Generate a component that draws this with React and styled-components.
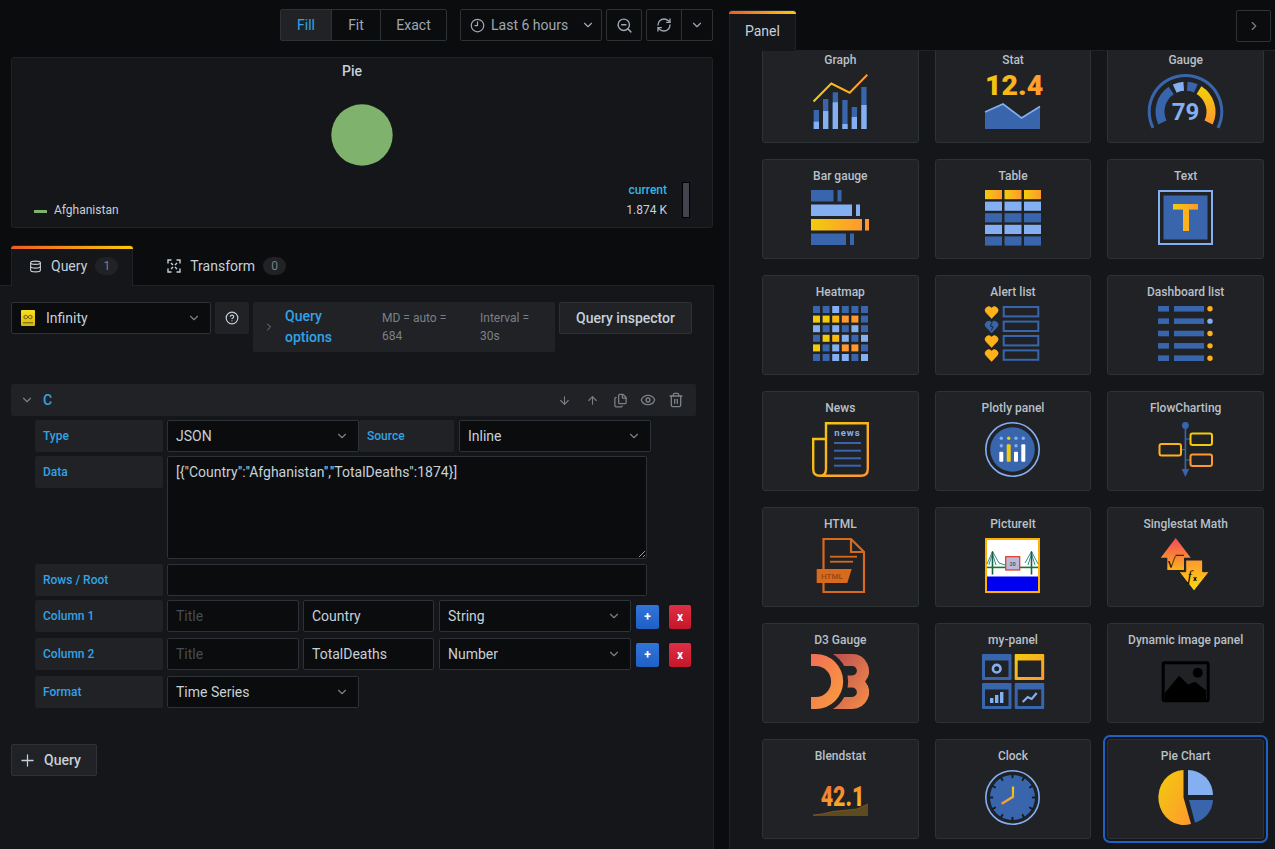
import React from 'react'
import styled, { createGlobalStyle } from 'styled-components'
import {
  ArrowDown, ArrowUp, ChevronDown, ChevronRight, CircleHelp, Clock9, Database, Eye, Files, Plus, RefreshCw, Trash2, ZoomOut,
} from 'lucide-react'

const DARK = '#3865ab'
const LIGHT = '#84aff1'
const AMBER = '#ffb11b'
const YELLOW = '#f2cc0c'
const ORANGE = '#ff9830'

const GlobalStyle = createGlobalStyle`
  html, body { margin: 0; padding: 0; background: #0b0c0e; }
  body { font-family: Roboto, "Liberation Sans", sans-serif; font-size: 14px; color: #c7d0d9; }
  * { box-sizing: border-box; }
`

const Page = styled.div`
  width: 1275px;
  height: 849px;
  display: flex;
  overflow: hidden;
  background: #0b0c0e;
`

const Left = styled.div`
  width: 714px;
  height: 100%;
  display: flex;
  flex-direction: column;
`

const Toolbar = styled.div`
  display: flex;
  justify-content: flex-end;
  padding: 9px 1px 0 0;
  height: 41px;
  flex: none;
`

const ToolGroup = styled.div`
  display: flex;
  margin-left: ${p => p.$gap || 4}px;
  height: 32px;
  border: 1px solid #2c3235;
  border-radius: 2px;
`

const ToolButton = styled.div`
  display: flex;
  align-items: center;
  justify-content: center;
  width: ${p => p.$w}px;
  color: ${p => (p.$active ? '#33a2e5' : '#9fa7b3')};
  background: ${p => (p.$active ? '#202226' : 'transparent')};
  border-left: ${p => (p.$first ? 'none' : '1px solid #2c3235')};
`

const TimeButton = styled(ToolButton)`
  justify-content: space-between;
  padding: 0 6px 0 9px;
`

const TimeLabel = styled.span`
  display: flex;
  align-items: center;
  gap: 6px;
`

const GraphPanel = styled.div`
  flex: none;
  margin: 16px 1px 0 11px;
  height: 171px;
  background: #141619;
  border: 1px solid #202226;
  border-radius: 3px;
  display: flex;
  flex-direction: column;
`

const PanelTitle = styled.div`
  height: 28px;
  line-height: 27px;
  text-align: center;
  padding-right: 20px;
  font-weight: 500;
  font-size: 14px;
`

const PieWrap = styled.div`
  flex: none;
  height: 62px;
  margin-top: 18px;
  display: flex;
  justify-content: center;
`

const Legend = styled.div`
  display: flex;
  justify-content: space-between;
  align-items: flex-end;
  padding: 0 22px 7px 22px;
  margin-top: 14px;
  font-size: 12px;
`

const LegendKey = styled.div`
  display: flex;
  align-items: center;
  height: 20px;
`

const Swatch = styled.span`
  width: 13px;
  height: 3px;
  margin: 2px 7px 0 0;
  background: #7eb26d;
`

const LegendRight = styled.div`
  display: flex;
  align-items: flex-end;
`

const LegendValues = styled.div`
  text-align: right;
  line-height: 20px;
`

const LegendHead = styled.div`
  color: #33b5e5;
  font-weight: 500;
`

const LegendBar = styled.div`
  width: 8px;
  height: 36px;
  margin: 0 0 2px 15px;
  background: #41434f;
  border: 1px solid #000;
`

const Tabs = styled.div`
  flex: none;
  display: flex;
  height: 41px;
  margin-top: 17px;
  padding-left: 11px;
  border-bottom: 1px solid #202226;
`

const Tab = styled.div`
  position: relative;
  display: flex;
  align-items: center;
  height: 41px;
  padding: 0 14px 0 17px;
  margin-left: ${p => (p.$active ? 0 : 16)}px;
  background: ${p => (p.$active ? '#141619' : 'transparent')};
  border: 1px solid ${p => (p.$active ? '#202226' : 'transparent')};
  border-bottom: none;
  border-radius: 3px 3px 0 0;
  &::before {
    content: '';
    display: ${p => (p.$active ? 'block' : 'none')};
    position: absolute;
    left: -1px;
    right: -1px;
    top: 0;
    height: 3px;
    background: linear-gradient(90deg, #f05a28, #fbca0a);
    border-radius: 3px 3px 0 0;
  }
`

const TabLabel = styled.span`
  margin-left: 9px;
`

const Badge = styled.span`
  margin-left: 8px;
  width: 23px;
  height: 18px;
  line-height: 18px;
  text-align: center;
  border-radius: 9px;
  background: #202226;
  color: #7b8087;
  font-size: 12px;
`

const QuerySection = styled.div`
  flex: 1;
  padding: 16px 0 0 11px;
  background: #141619;
  border-right: 1px solid #202226;
`

const TopRow = styled.div`
  display: flex;
  align-items: flex-start;
  height: 50px;
  margin-bottom: 32px;
`

const SelectBox = styled.div`
  display: flex;
  align-items: center;
  justify-content: space-between;
  flex: none;
  width: ${p => p.$w}px;
  height: 32px;
  padding: 0 9px 0 8px;
  margin-left: ${p => p.$ml || 0}px;
  background: #0b0c0e;
  border: 1px solid #2c3235;
  border-radius: 2px;
  color: #c7d0d9;
  svg { color: #7b8087; }
`

const SourceName = styled.div`
  display: flex;
  align-items: center;
  gap: 11px;
  margin-left: 1px;
`

const SourceLogo = styled.svg`
  width: 14px;
  height: 16px;
  display: block;
`

const HelpButton = styled.div`
  width: 34px;
  height: 32px;
  margin-left: 4px;
  display: flex;
  align-items: center;
  justify-content: center;
  background: #202226;
  border-radius: 2px;
`

const OptionsBox = styled.div`
  width: 302px;
  height: 50px;
  margin-left: 4px;
  padding-left: 10px;
  display: flex;
  align-items: center;
  background: #202226;
  border-radius: 2px;
  svg { color: #7b8087; flex: none; }
`

const OptionsTitle = styled.div`
  flex: none;
  width: 97px;
  margin-left: 10px;
  padding-right: 40px;
  color: #33a2e5;
  font-weight: 500;
  line-height: 21px;
`

const OptionsInfo = styled.div`
  flex: none;
  width: ${p => p.$w}px;
  padding-right: ${p => p.$pr}px;
  color: #7b8087;
  font-size: 12px;
  line-height: 18px;
`

const InspectorButton = styled.div`
  width: 133px;
  height: 32px;
  margin-left: 4px;
  display: flex;
  align-items: center;
  justify-content: center;
  font-weight: 500;
  background: #202226;
  border: 1px solid #2c3235;
  border-radius: 2px;
`

const QueryHeader = styled.div`
  width: 685px;
  height: 32px;
  display: flex;
  align-items: center;
  padding: 0 6px 0 9px;
  margin-bottom: 4px;
  background: #202226;
  border-radius: 2px;
  svg { color: #7b8087; }
`

const QueryLetter = styled.span`
  flex: 1;
  margin-left: 9px;
  color: #33a2e5;
  font-weight: 500;
`

const HeaderAction = styled.span`
  width: 28px;
  display: flex;
  justify-content: center;
`

const FormRow = styled.div`
  display: flex;
  align-items: flex-start;
  margin: 0 0 ${p => p.$mb ?? 4}px 24px;
`

const FieldLabel = styled.div`
  flex: none;
  width: ${p => p.$w || 128}px;
  height: 32px;
  line-height: 32px;
  padding-left: 8px;
  margin-right: ${p => p.$mr ?? 4}px;
  background: #202226;
  border-radius: 2px;
  color: #33a2e5;
  font-size: 12px;
  font-weight: 500;
`

const TextField = styled.input`
  flex: none;
  width: ${p => p.$w}px;
  height: 32px;
  padding: 0 8px;
  margin-right: ${p => p.$mr || 0}px;
  background: #0b0c0e;
  border: 1px solid #2c3235;
  border-radius: 2px;
  color: #c7d0d9;
  font: 14px Roboto, sans-serif;
  outline: none;
  &::placeholder { color: #464c54; opacity: 1; }
`

const DataArea = styled.textarea`
  display: block;
  flex: none;
  width: 480px;
  height: 103px;
  padding: 5px 8px;
  margin: 0;
  background: #0b0c0e;
  border: 1px solid #2c3235;
  border-radius: 2px;
  color: #c7d0d9;
  font: 14px/20px Roboto, sans-serif;
  outline: none;
  resize: vertical;
`

const SquareButton = styled.div`
  flex: none;
  width: ${p => p.$w}px;
  height: 24px;
  margin: 5px 0 0 ${p => p.$ml}px;
  display: flex;
  align-items: center;
  justify-content: center;
  border-radius: 2px;
  color: #fff;
  font-size: 12px;
  font-weight: 700;
  background: ${p => (p.$danger ? 'linear-gradient(180deg, #e02f44, #c4162a)' : 'linear-gradient(180deg, #3274d9, #1f60c4)')};
`

const AddQuery = styled.div`
  width: 86px;
  height: 32px;
  margin-top: 36px;
  display: flex;
  align-items: center;
  gap: 7px;
  padding-left: 6px;
  background: #202226;
  border: 1px solid #2c3235;
  border-radius: 2px;
  font-weight: 500;
`

const Right = styled.div`
  flex: 1;
  margin-left: 15px;
  height: 100%;
  display: flex;
  flex-direction: column;
  min-width: 0;
`

const RightHead = styled.div`
  flex: none;
  position: relative;
  z-index: 1;
  height: 51px;
  padding: 10px 4px 0 0;
  display: flex;
  justify-content: space-between;
  align-items: flex-start;
  background: #0b0c0e;
  border-bottom: 1px solid #202226;
`

const PanelTab = styled(Tab)`
  width: 67px;
  padding: 0 0 0 15px;
`

const CollapseButton = styled.div`
  width: 35px;
  height: 32px;
  display: flex;
  align-items: center;
  justify-content: center;
  border: 1px solid #2c3235;
  border-radius: 2px;
  svg { color: #7b8087; }
`

const RightBody = styled.div`
  flex: 1;
  overflow: hidden;
  padding: 0 11px 0 32px;
  background: #141619;
  border-left: 1px solid #202226;
`

const CardGrid = styled.div`
  display: grid;
  grid-template-columns: repeat(3, 1fr);
  gap: 16px;
  margin-top: -8px;
`

const Card = styled.div`
  height: 100px;
  padding-top: 7px;
  display: flex;
  flex-direction: column;
  align-items: center;
  background: #202226;
  border: 1px solid #2c3235;
  border-radius: 3px;
  box-shadow: ${p => (p.$selected ? '0 0 0 2px #141619, 0 0 0 4px #1f60c4' : 'none')};
`

const CardTitle = styled.div`
  height: 18px;
  line-height: 18px;
  margin-bottom: 5px;
  font-size: 12px;
  font-weight: 500;
  color: #b9c0c8;
`

const Art = styled.svg`
  display: block;
  flex: none;
  width: ${p => p.$w || 55}px;
  height: 55px;
  overflow: visible;
  font-family: Roboto, sans-serif;
`

const GradientDefs = styled.svg`
  display: block;
  width: 0;
  height: 0;
`

function Gradients() {
  return (
    <GradientDefs aria-hidden="true">
      <defs>
        <linearGradient id="warm"><stop offset="0" stopColor={YELLOW} /><stop offset="1" stopColor={ORANGE} /></linearGradient>
        <linearGradient id="warmDiag" x1="0" y1="0" x2="1" y2="1"><stop offset="0" stopColor={YELLOW} /><stop offset="1" stopColor={ORANGE} /></linearGradient>
        <linearGradient id="warmDown" x1="0" y1="0" x2="0" y2="1"><stop offset="0" stopColor={YELLOW} /><stop offset="1" stopColor={ORANGE} /></linearGradient>
        <linearGradient id="hotUp" x1="0" y1="0" x2="0" y2="1"><stop offset="0" stopColor="#f2495c" /><stop offset="1" stopColor={AMBER} /></linearGradient>
        <linearGradient id="hotDown" x1="0" y1="0" x2="0" y2="1"><stop offset="0" stopColor={ORANGE} /><stop offset="1" stopColor="#ffd90c" /></linearGradient>
        <linearGradient id="blend" x1="0" y1="0" x2="0.6" y2="1"><stop offset="0" stopColor="#f2603f" /><stop offset="1" stopColor="#f6c21a" /></linearGradient>
        <linearGradient id="d3a" x1="0" y1="0" x2="1" y2="1"><stop offset="0" stopColor="#f26d58" /><stop offset="1" stopColor="#f9a03c" /></linearGradient>
        <linearGradient id="d3b" x1="0" y1="0" x2="1" y2="1"><stop offset="0" stopColor="#b84e51" /><stop offset="1" stopColor="#f68e48" /></linearGradient>
        <linearGradient id="logo" x1="0" y1="0" x2="0" y2="1"><stop offset="0" stopColor="#f7e21f" /><stop offset="1" stopColor="#d9b40c" /></linearGradient>
      </defs>
    </GradientDefs>
  )
}

const GraphIcon = () => {
  const bars = [[0.7, 36, 47.7], [10, 25, 37], [19.7, 18.3, 28.3], [29.3, 26, 50], [38.7, 33, 43], [48.3, 13, 31]]
  return (
    <Art viewBox="0 0 55 55">
      {bars.map(([x, top, mid]) => (
        <g key={x}>
          <rect x={x} y={top} width="5.3" height={55 - top} fill={DARK} />
          <rect x={x} y={mid} width="5.3" height={55 - mid} fill={LIGHT} />
        </g>
      ))}
      <polyline points="0.5,27.5 18.3,9.5 36.7,18.7 54.3,0.8" fill="none" stroke="url(#warm)" strokeWidth="2" />
    </Art>
  )
}

const StatIcon = () => (
  <Art viewBox="0 0 56 55" $w={56}>
    <text x="0" y="21" fontSize="28.5" fontWeight="900" fill="url(#warm)">12.4</text>
    <polygon points="0,38 18,30 36.5,44 55,32.5 55,55 0,55" fill={DARK} />
    <polyline points="0,38 18,30 36.5,44 55,32.5" fill="none" stroke={LIGHT} strokeWidth="1.6" />
  </Art>
)

const gaugeArc = (r, a0, a1) => {
  const pt = a => [38.5 + r * Math.cos((a * Math.PI) / 180), 37.7 - r * Math.sin((a * Math.PI) / 180)]
  const [x0, y0] = pt(a0)
  const [x1, y1] = pt(a1)
  return `M${x0} ${y0}A${r} ${r} 0 ${a0 - a1 > 180 ? 1 : 0} 1 ${x1} ${y1}`
}

const GaugeIcon = () => (
  <Art viewBox="0 0 77 55" $w={77}>
    <path d={gaugeArc(36.3, 206.5, -26.5)} fill="none" stroke={DARK} strokeWidth="3" />
    <path d={gaugeArc(25.5, 205, 124)} fill="none" stroke={DARK} strokeWidth="9" />
    <path d={gaugeArc(25.5, 115, 94)} fill="none" stroke={LIGHT} strokeWidth="9" />
    <path d={gaugeArc(25.5, 86, 66)} fill="none" stroke={DARK} strokeWidth="9" />
    <path d={gaugeArc(25.5, 58, -25)} fill="none" stroke="url(#warmDown)" strokeWidth="9" />
    <text x="38.5" y="46" fontSize="24" fontWeight="700" fill={LIGHT} textAnchor="middle">79</text>
  </Art>
)

const BarGaugeIcon = () => {
  const rows = [[0, 22.5, 26.5, DARK], [14.5, 41, 45, LIGHT], [29, 51, 54, 'url(#warm)'], [43.5, 35, 39, DARK]]
  return (
    <Art viewBox="0 0 58 55" $w={58}>
      {rows.map(([y, w, tick, fill]) => (
        <g key={y}>
          <rect x="0" y={y} width={w} height="11.5" fill={fill} />
          <rect x={tick} y={y} width="4" height="11.5" fill={fill === DARK || fill === LIGHT ? fill : ORANGE} />
        </g>
      ))}
    </Art>
  )
}

const TableIcon = () => {
  const rows = ['url(#warm)', LIGHT, DARK, LIGHT, DARK]
  return (
    <Art viewBox="0 0 56 55" $w={56}>
      {rows.map((fill, r) => [0, 19.5, 39].map(x => (
        <rect key={`${r}-${x}`} x={x} y={r * 11.6} width="17" height="9.2" fill={fill} />
      )))}
    </Art>
  )
}

const TextIcon = () => (
  <Art viewBox="0 0 55 55">
    <rect x="1" y="1" width="53" height="53" fill="none" stroke={LIGHT} strokeWidth="2" />
    <rect x="5.5" y="5.5" width="44" height="44" fill={DARK} />
    <rect x="15" y="14" width="25" height="5.6" fill="url(#warm)" />
    <rect x="25" y="19" width="6" height="22" fill={AMBER} />
  </Art>
)

const HeatmapIcon = () => {
  const colors = { d: DARK, l: LIGHT, y: YELLOW, a: '#fbb912', o: ORANGE }
  const grid = ['ddlddd', 'yyaood', 'ldldld', 'dyaldl', 'ydlood', 'ddlldl']
  return (
    <Art viewBox="0 0 55 55">
      {grid.map((row, r) => row.split('').map((c, i) => (
        <rect key={`${r}-${i}`} x={i * 9.6} y={r * 9.6} width="7" height="7" fill={colors[c]} />
      )))}
    </Art>
  )
}

const Heart = ({ y, fill, broken }) => (
  <g transform={`translate(0 ${y})`}>
    <path d="M6.6 12.4 L1 6.6 A3.5 3.5 0 0 1 6.6 2 A3.5 3.5 0 0 1 12.2 6.6 Z" fill={fill} stroke={fill} strokeWidth="0.6" strokeLinejoin="round" />
    {broken && <polyline points="7.2,2 5.2,5.6 8,6.4 6.2,10" fill="none" stroke="#202226" strokeWidth="1" />}
  </g>
)

const AlertListIcon = () => (
  <Art viewBox="0 0 55 55">
    <Heart y={0} fill={AMBER} />
    <Heart y={14.5} fill={DARK} broken />
    <Heart y={29} fill={AMBER} />
    <Heart y={43} fill={AMBER} />
    {[1, 15.6, 30, 44.4].map(y => (
      <rect key={y} x="18.7" y={y} width="34.6" height="9.4" fill="none" stroke={DARK} strokeWidth="2" />
    ))}
  </Art>
)

const DashListIcon = () => (
  <Art viewBox="0 0 55 55">
    {[0, 1, 2, 3, 4].map(i => (
      <g key={i}>
        <rect x="0" y={i * 12.35} width="11" height="5.6" fill={DARK} />
        <rect x="16" y={i * 12.35} width="30" height="5.6" fill={DARK} />
        <circle cx="52" cy={i * 12.35 + 2.8} r="2.7" fill={i === 1 ? LIGHT : AMBER} />
      </g>
    ))}
  </Art>
)

const NewsIcon = () => (
  <Art viewBox="0 0 57 55" $w={57}>
    <path d="M14 17V1.2H55.8V47Q55.8 53.8 49 53.8H8Q1.2 53.8 1.2 47V17H14V47Q14 53.8 8 53.8" fill="none" stroke="url(#warmDiag)" strokeWidth="2.4" />
    <text x="35.5" y="14" fontSize="9.5" fontWeight="700" fill={LIGHT} textAnchor="middle" letterSpacing="1">news</text>
    {[21, 28.7, 36.3, 43.7].map(y => (
      <rect key={y} x="22" y={y - 1} width="27" height="2" fill={DARK} />
    ))}
  </Art>
)

const PlotlyIcon = () => {
  const bars = [[16.3, 29.7, '#fff'], [23.7, 22.3, YELLOW], [31, 29.7, '#fff'], [38.3, 22.3, '#fff']]
  return (
    <Art viewBox="0 0 55 55">
      <circle cx="27.5" cy="27.5" r="26.7" fill="none" stroke={LIGHT} strokeWidth="1.6" />
      <circle cx="27.5" cy="27.5" r="22.3" fill={DARK} />
      {[16.3, 23.7, 31, 38.3].map((x, i) => <circle key={x} cx={x} cy="16.3" r="1.7" fill={i === 1 ? YELLOW : LIGHT} />)}
      {[16.3, 31].map(x => <circle key={x} cx={x} cy="23.7" r="1.7" fill={LIGHT} />)}
      {bars.map(([x, y, fill]) => <rect key={x} x={x - 2} y={y} width="4" height={39.7 - y} rx="1" fill={fill} />)}
    </Art>
  )
}

const FlowIcon = () => (
  <Art viewBox="0 0 55 55">
    <rect x="26.6" y="3" width="1.6" height="46" fill={DARK} />
    <circle cx="27.4" cy="3.4" r="3.4" fill={DARK} />
    <polygon points="23.7,47 31.1,47 27.4,55" fill={DARK} />
    <rect x="28" y="16.4" width="4" height="1.2" fill={DARK} />
    <rect x="23" y="27" width="4" height="1.2" fill={DARK} />
    <rect x="28" y="37.4" width="4" height="1.2" fill={DARK} />
    <rect x="32.5" y="11.5" width="21.5" height="11.5" rx="2" fill="none" stroke={YELLOW} strokeWidth="2" />
    <rect x="1.5" y="22" width="21.5" height="11.5" rx="2" fill="none" stroke={AMBER} strokeWidth="2" />
    <rect x="32.5" y="32.5" width="21.5" height="11.5" rx="2" fill="none" stroke={ORANGE} strokeWidth="2" />
  </Art>
)

const HtmlIcon = () => (
  <Art viewBox="0 0 55 55">
    <path d="M10.5 31V1H38L51 14V54H10.5V45" fill="none" stroke="#d8691d" strokeWidth="2.2" />
    <path d="M38 1V14H51" fill="none" stroke="#d8691d" strokeWidth="2.2" />
    <rect x="17" y="17.8" width="27" height="1.8" fill="#d8691d" />
    <rect x="17" y="22.8" width="23" height="1.8" fill="#d8691d" />
    <polygon points="3.7,31 38.7,31 34.3,45 3.7,45" fill="#d8691d" />
    <text x="8" y="41" fontSize="8" fontWeight="500" fill="#8d4a1b">HTML</text>
  </Art>
)

const PictureItIcon = () => (
  <Art viewBox="0 0 55 55">
    <rect x="1" y="1" width="53" height="53" fill="#fff" stroke="#ffb000" strokeWidth="2" />
    <rect x="2" y="38.5" width="51" height="14.5" fill="#0000f0" />
    <path d="M2 26 L7.5 13.5 L14 25 M7.5 13.5 V27 M3.8 27 L7.5 16 M11 27 L7.5 16 M46.5 13.5 L40 25 M46.5 13.5 L53 26 M46.5 13.5 V27 M43 27 L46.5 16 M50 27 L46.5 16 M14 25 L20 27" fill="none" stroke="#2f8f8f" strokeWidth="1" />
    <rect x="6.7" y="13.5" width="1.6" height="23" fill="#1f5f4a" />
    <rect x="45.7" y="13.5" width="1.6" height="23" fill="#1f5f4a" />
    <rect x="2" y="28.6" width="51" height="1.6" fill="#0f7f20" />
    <rect x="20.7" y="18.7" width="14" height="13.3" fill="#b9b9dc" stroke="#e8331a" strokeWidth="1.2" />
    <text x="27.7" y="27.5" fontSize="5" fontWeight="700" fill="#555" textAnchor="middle">20</text>
  </Art>
)

const SinglestatIcon = () => (
  <Art viewBox="0 0 55 55">
    <polygon points="17.7,0 32.7,19.7 26,19.7 26,32 9.3,32 9.3,19.7 2.7,19.7" fill="url(#hotUp)" />
    <polygon points="27.7,22 44.7,22 44.7,33.7 51.3,33.7 36,53 21,33.7 27.7,33.7" fill="url(#hotDown)" stroke="#202226" strokeWidth="1" />
    <text x="9" y="30" fontSize="14" fill="#000" fontFamily="DejaVu Sans, sans-serif">√</text>
    <rect x="17.5" y="16.8" width="8.5" height="0.9" fill="#000" />
    <text x="29.5" y="43" fontSize="15" fontStyle="italic" fill="#000" fontFamily="Liberation Serif, serif">f</text>
    <text x="35" y="43" fontSize="7.5" fontWeight="700" fill="#000">x</text>
  </Art>
)

const D3Icon = () => (
  <Art viewBox="0 0 96 91" $w={58}>
    <path d="M0,0h7.75a45.5,45.5 0 1 1 0,91h-7.75v-20h7.75a25.5,25.5 0 1 0 0,-51h-7.75z" fill="url(#d3a)" />
    <path d="M36.251,0h32a27.75,27.75 0 0 1 21.331,45.5a27.75,27.75 0 0 1 -21.331,45.5h-32a53.6895,53.6895 0 0 0 18.7464,-20h13.2526a7.75,7.75 0 1 0 0,-15.5h-7.75a53.6895,53.6895 0 0 0 0,-20h7.75a7.75,7.75 0 1 0 0,-15.5h-13.2526a53.6895,53.6895 0 0 0 -18.7464,-20z" fill="url(#d3b)" />
  </Art>
)

const MiniWindow = ({ x, y, frame, children }) => (
  <g transform={`translate(${x} ${y})`}>
    <rect width="29.5" height="26" rx="1" fill={frame} />
    <rect x="3" y="6.5" width="23.5" height="16.5" fill="#202226" />
    {children}
  </g>
)

const MyPanelIcon = () => (
  <Art viewBox="0 0 62 55" $w={62}>
    <MiniWindow x={0} y={0} frame={DARK}>
      <circle cx="14.7" cy="14.7" r="3.8" fill="none" stroke={LIGHT} strokeWidth="2.6" />
    </MiniWindow>
    <MiniWindow x={32.7} y={0} frame="url(#warmDiag)" />
    <MiniWindow x={0} y={29} frame={DARK}>
      <rect x="8" y="15" width="3.4" height="5" fill={LIGHT} />
      <rect x="13" y="12" width="3.4" height="8" fill={LIGHT} />
      <rect x="18" y="9" width="3.4" height="11" fill={LIGHT} />
    </MiniWindow>
    <MiniWindow x={32.7} y={29} frame={DARK}>
      <polyline points="8,19 13,14 17,16 22,10" fill="none" stroke={LIGHT} strokeWidth="2.2" />
    </MiniWindow>
  </Art>
)

const ImageIcon = () => (
  <Art viewBox="0 0 55 55">
    <rect x="5.2" y="8.8" width="45" height="38" rx="1.5" fill="none" stroke="#000" strokeWidth="3" />
    <polygon points="7,38.7 21,21.7 30,30.5 37,27.7 48,36.3 48,46 7,46" fill="#000" />
    <circle cx="39.8" cy="18.7" r="5" fill="#000" />
  </Art>
)

const BlendstatIcon = () => (
  <Art viewBox="0 0 55 55">
    <g transform="translate(7.7 36) scale(0.79 1)">
      <text x="0" y="0" fontSize="27" fontWeight="900" fill="url(#blend)">42.1</text>
    </g>
    <polygon points="0,45 9,44 20,41.5 35,40 44,39 55,34 55,46 0,46" fill="#5c4a20" />
    <polyline points="0,45 9,44 20,41.5 35,40 44,39 55,34" fill="none" stroke="#8a5a2a" strokeWidth="0.8" />
  </Art>
)

const ClockIcon = () => (
  <Art viewBox="0 0 55 55">
    <circle cx="27.5" cy="27.5" r="26.7" fill="none" stroke={LIGHT} strokeWidth="1.6" />
    <circle cx="27.5" cy="27.5" r="23" fill={DARK} stroke="#16181b" strokeWidth="0.8" />
    {Array.from({ length: 12 }, (_, i) => (
      <rect key={i} x="26.6" y="4.5" width="1.8" height="3.6" fill="#16181b" transform={`rotate(${i * 30} 27.5 27.5)`} />
    ))}
    <path d="M28 16.5V26.8L16.7 33.8" fill="none" stroke="url(#warmDown)" strokeWidth="2.2" />
  </Art>
)

const PieIcon = () => (
  <Art viewBox="0 0 55 55">
    <path d="M25.5 0A25.5 27.5 0 1 0 33 53.9L25.5 27.5Z" fill="url(#warmDiag)" />
    <path d="M30 25V0A25 25 0 0 1 55 25Z" fill={LIGHT} />
    <path d="M31 30H55A25 25 0 0 1 37 52.7Z" fill={DARK} />
  </Art>
)

const TransformIcon = () => (
  <svg width="14" height="14" viewBox="0 0 14 14" fill="none" stroke="#c7d0d9" strokeWidth="1.4">
    <path d="M1 4.5V1H4.5M9.5 1H13V4.5M13 9.5V13H9.5M4.5 13H1V9.5" />
    <path d="M4 4L6 6M10 4L8 6M10 10L8 8M4 10L6 8" />
  </svg>
)

const cards = [
  ['Graph', GraphIcon], ['Stat', StatIcon], ['Gauge', GaugeIcon],
  ['Bar gauge', BarGaugeIcon], ['Table', TableIcon], ['Text', TextIcon],
  ['Heatmap', HeatmapIcon], ['Alert list', AlertListIcon], ['Dashboard list', DashListIcon],
  ['News', NewsIcon], ['Plotly panel', PlotlyIcon], ['FlowCharting', FlowIcon],
  ['HTML', HtmlIcon], ['PictureIt', PictureItIcon], ['Singlestat Math', SinglestatIcon],
  ['D3 Gauge', D3Icon], ['my-panel', MyPanelIcon], ['Dynamic image panel', ImageIcon],
  ['Blendstat', BlendstatIcon], ['Clock', ClockIcon], ['Pie Chart', PieIcon],
]

const Chevron = () => <ChevronDown size={14} />

function ColumnRow({ name, field, kind, mb }) {
  return (
    <FormRow $mb={mb}>
      <FieldLabel>{name}</FieldLabel>
      <TextField $w={132} $mr={4} placeholder="Title" />
      <TextField $w={131} $mr={5} defaultValue={field} />
      <SelectBox $w={192}>{kind}<Chevron /></SelectBox>
      <SquareButton $w={23} $ml={5}>+</SquareButton>
      <SquareButton $w={22} $ml={10} $danger>x</SquareButton>
    </FormRow>
  )
}

export default function App() {
  return (
    <Page>
      <GlobalStyle />
      <Left>
        <Gradients />
        <Toolbar>
          <ToolGroup>
            <ToolButton $w={50} $first $active>Fill</ToolButton>
            <ToolButton $w={49}>Fit</ToolButton>
            <ToolButton $w={66}>Exact</ToolButton>
          </ToolGroup>
          <ToolGroup $gap={13}>
            <TimeButton $w={140} $first>
              <TimeLabel><Clock9 size={15} />Last 6 hours</TimeLabel>
              <ChevronDown size={14} />
            </TimeButton>
          </ToolGroup>
          <ToolGroup>
            <ToolButton $w={34} $first><ZoomOut size={17} /></ToolButton>
          </ToolGroup>
          <ToolGroup>
            <ToolButton $w={34} $first><RefreshCw size={16} /></ToolButton>
            <ToolButton $w={31}><ChevronDown size={14} /></ToolButton>
          </ToolGroup>
        </Toolbar>

        <GraphPanel>
          <PanelTitle>Pie</PanelTitle>
          <PieWrap>
            <svg width="62" height="62" viewBox="0 0 62 62"><circle cx="31" cy="31" r="30.7" fill="#7eb26d" /></svg>
          </PieWrap>
          <Legend>
            <LegendKey><Swatch />Afghanistan</LegendKey>
            <LegendRight>
              <LegendValues>
                <LegendHead>current</LegendHead>
                <div>1.874 K</div>
              </LegendValues>
              <LegendBar />
            </LegendRight>
          </Legend>
        </GraphPanel>

        <Tabs>
          <Tab $active><Database size={13} /><TabLabel>Query</TabLabel><Badge>1</Badge></Tab>
          <Tab><TransformIcon /><TabLabel>Transform</TabLabel><Badge>0</Badge></Tab>
        </Tabs>

        <QuerySection>
          <TopRow>
            <SelectBox $w={200}>
              <SourceName>
                <SourceLogo viewBox="0 0 14 16">
                  <rect width="14" height="16" rx="1" fill="url(#logo)" />
                  <path d="M7 7C5.5 4.5 3 5 3 7S5.5 9.5 7 7S11 5 11 7S8.5 9.5 7 7Z" fill="none" stroke="#5d4c08" strokeWidth="1" />
                  <rect x="2" y="12" width="10" height="1.4" fill="#8a7510" />
                </SourceLogo>
                Infinity
              </SourceName>
              <Chevron />
            </SelectBox>
            <HelpButton><CircleHelp size={14} /></HelpButton>
            <OptionsBox>
              <ChevronRight size={12} />
              <OptionsTitle>Query options</OptionsTitle>
              <OptionsInfo $w={98} $pr={20}>MD = auto = 684</OptionsInfo>
              <OptionsInfo $w={75} $pr={5}>Interval = 30s</OptionsInfo>
            </OptionsBox>
            <InspectorButton>Query inspector</InspectorButton>
          </TopRow>

          <QueryHeader>
            <Chevron />
            <QueryLetter>C</QueryLetter>
            <HeaderAction><ArrowDown size={13} /></HeaderAction>
            <HeaderAction><ArrowUp size={13} /></HeaderAction>
            <HeaderAction><Files size={15} /></HeaderAction>
            <HeaderAction><Eye size={16} /></HeaderAction>
            <HeaderAction><Trash2 size={16} /></HeaderAction>
          </QueryHeader>

          <FormRow>
            <FieldLabel>Type</FieldLabel>
            <SelectBox $w={192}>JSON<Chevron /></SelectBox>
            <FieldLabel $w={95} $mr={5}>Source</FieldLabel>
            <SelectBox $w={192}>Inline<Chevron /></SelectBox>
          </FormRow>
          <FormRow $mb={5}>
            <FieldLabel>Data</FieldLabel>
            <DataArea defaultValue={'[{"Country":"Afghanistan","TotalDeaths":1874}]'} />
          </FormRow>
          <FormRow>
            <FieldLabel>Rows / Root</FieldLabel>
            <TextField $w={480} />
          </FormRow>
          <ColumnRow name="Column 1" field="Country" kind="String" mb={6} />
          <ColumnRow name="Column 2" field="TotalDeaths" kind="Number" mb={6} />
          <FormRow $mb={0}>
            <FieldLabel>Format</FieldLabel>
            <SelectBox $w={192}>Time Series<Chevron /></SelectBox>
          </FormRow>

          <AddQuery><Plus size={19} strokeWidth={1.6} />Query</AddQuery>
        </QuerySection>
      </Left>

      <Right>
        <RightHead>
          <PanelTab $active>Panel</PanelTab>
          <CollapseButton><ChevronRight size={14} /></CollapseButton>
        </RightHead>
        <RightBody>
          <CardGrid>
            {cards.map(([title, Icon]) => (
              <Card key={title} $selected={title === 'Pie Chart'}>
                <CardTitle>{title}</CardTitle>
                <Icon />
              </Card>
            ))}
          </CardGrid>
        </RightBody>
      </Right>
    </Page>
  )
}
